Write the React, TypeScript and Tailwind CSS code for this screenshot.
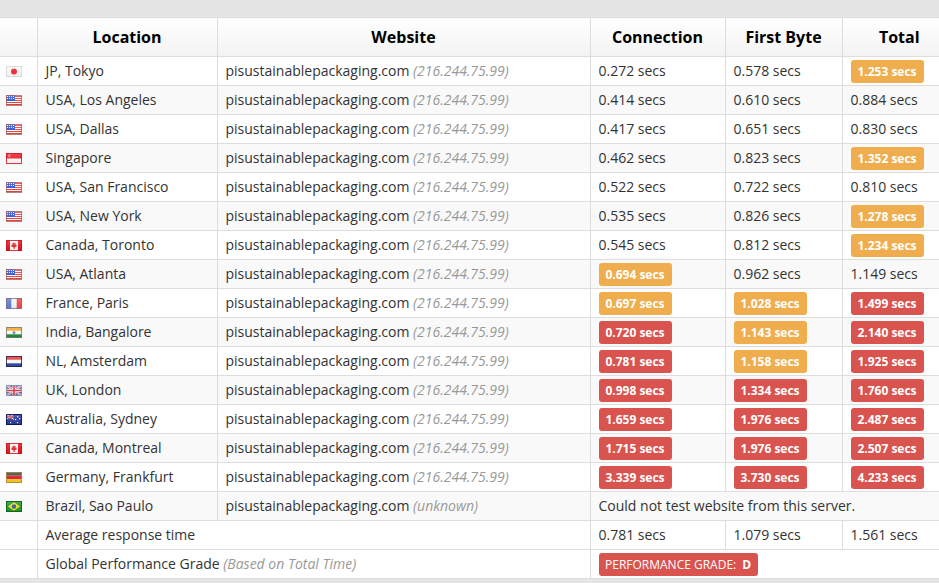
import React from "react";

const Gloss = () => (
  <>
    <defs>
      <linearGradient id="gl" x1="0" y1="0" x2="0" y2="1">
        <stop offset="0" stopColor="#fff" stopOpacity="0.18" />
        <stop offset="0.5" stopColor="#fff" stopOpacity="0.06" />
        <stop offset="1" stopColor="#000" stopOpacity="0.05" />
      </linearGradient>
    </defs>
    <rect x="0" y="0" width="16" height="11" fill="url(#gl)" />
  </>
);

const Frame = ({ c, children }: { c: string; children: React.ReactNode }) => (
  <svg width="16" height="11" viewBox="0 0 16 11" className="block">
    {children}
    <Gloss />
    <rect x="0.5" y="0.5" width="15" height="10" fill="none" stroke={c} strokeOpacity="0.8" />
  </svg>
);

const US = () => (
  <Frame c="#a5645f">
    <rect width="16" height="11" fill="#fff" />
    {[1, 3, 5, 7, 9].map((y) => (
      <rect key={y} y={y} width="16" height="1" fill="#ea4038" />
    ))}
    <rect width="9" height="6" fill="#2f55d8" />
    {[1, 3].map((y) =>
      [1, 3, 5, 7].map((x) => <rect key={`${x}-${y}`} x={x} y={y} width="1" height="1" fill="#e6ecff" />)
    )}
  </Frame>
);

const JP = () => (
  <Frame c="#d4d4d4">
    <rect width="16" height="11" fill="#f8f8f8" />
    <circle cx="8" cy="5.5" r="3" fill="#f0242c" />
  </Frame>
);

const SG = () => (
  <Frame c="#c8141c">
    <rect width="16" height="11" fill="#f7f7f7" />
    <rect width="16" height="5.5" fill="#e8202a" />
    <circle cx="4" cy="2.7" r="1.6" fill="#fbd" />
    <circle cx="4.7" cy="2.7" r="1.4" fill="#e8202a" />
    <rect x="1" y="6" width="14" height="4" fill="#f6f6f6" />
  </Frame>
);

const CA = () => (
  <Frame c="#c8101a">
    <rect width="16" height="11" fill="#f8f8f8" />
    <rect width="4" height="11" fill="#e3141f" />
    <rect x="12" width="4" height="11" fill="#e3141f" />
    <path d="M8 2l.8 1.4 1-.4-.3 2 1.3-.4-.5 1.3.7.4L8.6 7.6V9h-1V7.6L5 6.3l.7-.4-.5-1.3 1.3.4-.3-2 1 .4z" fill="#e3242b" />
  </Frame>
);

const FR = () => (
  <Frame c="#7f6f8f">
    <rect width="16" height="11" fill="#f0f2f8" />
    <rect width="5.3" height="11" fill="#5f7cd0" />
    <rect x="10.7" width="5.3" height="11" fill="#ec4a45" />
  </Frame>
);

const IN = () => (
  <Frame c="#777">
    <rect width="16" height="11" fill="#f8f8f8" />
    <rect width="16" height="3.7" fill="#f5a623" />
    <rect y="7.3" width="16" height="3.7" fill="#1f8a2f" />
    <circle cx="8" cy="5.5" r="1.5" fill="#7a87b5" />
  </Frame>
);

const NL = () => (
  <Frame c="#223">
    <rect width="16" height="11" fill="#f8f8f8" />
    <rect width="16" height="3.7" fill="#e63b3f" />
    <rect y="7.3" width="16" height="3.7" fill="#2f4aa5" />
  </Frame>
);

const UK = () => (
  <Frame c="#8890b0">
    <rect width="16" height="11" fill="#5068b8" />
    <path d="M0 0L16 11M16 0L0 11" stroke="#f4f4f4" strokeWidth="2" />
    <path d="M0 0L16 11M16 0L0 11" stroke="#e0404a" strokeWidth="0.7" />
    <path d="M8 0V11M0 5.5H16" stroke="#f4f4f4" strokeWidth="3" />
    <path d="M8 0V11M0 5.5H16" stroke="#e0303a" strokeWidth="1.6" />
  </Frame>
);

const AU = () => (
  <Frame c="#0a1050">
    <rect width="16" height="11" fill="#2c3a96" />
    <path d="M0 0L8 5.5M8 0L0 5.5" stroke="#e8e8f0" strokeWidth="1" />
    <path d="M4 0V5.5M0 2.7H8" stroke="#e0505a" strokeWidth="1.2" />
    {[[11, 2], [13, 4], [11, 8], [9, 5], [4, 8]].map(([x, y]) => (
      <rect key={`${x}${y}`} x={x} y={y} width="1.2" height="1.2" fill="#eef" />
    ))}
  </Frame>
);

const DE = () => (
  <Frame c="#a08a40">
    <rect width="16" height="3.7" fill="#444" />
    <rect y="3.7" width="16" height="3.6" fill="#dd2020" />
    <rect y="7.3" width="16" height="3.7" fill="#fbc818" />
  </Frame>
);

const BR = () => (
  <Frame c="#0a5a18">
    <rect width="16" height="11" fill="#1f9a2e" />
    <path d="M8 1.3L14 5.5L8 9.7L2 5.5Z" fill="#f5dc20" />
    <circle cx="8" cy="5.5" r="2.2" fill="#3553a8" />
  </Frame>
);

type B = string | [string, "o" | "r"];
type Row = { f: React.FC; loc: string; ip?: string; c?: B; b?: B; t?: B };

const rows: Row[] = [
  { f: JP, loc: "JP, Tokyo", c: "0.272", b: "0.578", t: ["1.253", "o"] },
  { f: US, loc: "USA, Los Angeles", c: "0.414", b: "0.610", t: "0.884" },
  { f: US, loc: "USA, Dallas", c: "0.417", b: "0.651", t: "0.830" },
  { f: SG, loc: "Singapore", c: "0.462", b: "0.823", t: ["1.352", "o"] },
  { f: US, loc: "USA, San Francisco", c: "0.522", b: "0.722", t: "0.810" },
  { f: US, loc: "USA, New York", c: "0.535", b: "0.826", t: ["1.278", "o"] },
  { f: CA, loc: "Canada, Toronto", c: "0.545", b: "0.812", t: ["1.234", "o"] },
  { f: US, loc: "USA, Atlanta", c: ["0.694", "o"], b: "0.962", t: "1.149" },
  { f: FR, loc: "France, Paris", c: ["0.697", "o"], b: ["1.028", "o"], t: ["1.499", "r"] },
  { f: IN, loc: "India, Bangalore", c: ["0.720", "r"], b: ["1.143", "o"], t: ["2.140", "r"] },
  { f: NL, loc: "NL, Amsterdam", c: ["0.781", "r"], b: ["1.158", "o"], t: ["1.925", "r"] },
  { f: UK, loc: "UK, London", c: ["0.998", "r"], b: ["1.334", "r"], t: ["1.760", "r"] },
  { f: AU, loc: "Australia, Sydney", c: ["1.659", "r"], b: ["1.976", "r"], t: ["2.487", "r"] },
  { f: CA, loc: "Canada, Montreal", c: ["1.715", "r"], b: ["1.976", "r"], t: ["2.507", "r"] },
  { f: DE, loc: "Germany, Frankfurt", c: ["3.339", "r"], b: ["3.730", "r"], t: ["4.233", "r"] },
  { f: BR, loc: "Brazil, Sao Paulo", ip: "unknown" },
];

const td = "h-[29px] border border-[#dddddd] px-2 py-0 align-middle whitespace-nowrap overflow-hidden";
const th = "h-[39px] border border-[#dddddd] p-0 text-center align-middle text-base font-bold text-black bg-gradient-to-b from-white to-[#f3f3f3]";

const Val = ({ v }: { v: B }) =>
  typeof v === "string" ? (
    <>{v} secs</>
  ) : (
    <span
      className={`inline-block h-[23px] w-[73px] rounded-[3px] text-center align-middle text-xs leading-[23px] font-bold text-white ${
        v[1] === "o" ? "bg-[#f0ad4e]" : "bg-[#d9534f]"
      }`}
    >
      {v[0]} secs
    </span>
  );

export default function App() {
  return (
    <div className="h-[583px] w-[939px] overflow-hidden bg-[#e5e5e5] pt-[17px] font-['Open_Sans',sans-serif] text-sm text-[#333333]">
      <table className="w-[956px] max-w-none table-fixed border-collapse bg-white">
        <colgroup>
          <col className="w-[37px]" />
          <col className="w-[180px]" />
          <col className="w-[373px]" />
          <col className="w-[135px]" />
          <col className="w-[117px]" />
          <col className="w-[114px]" />
        </colgroup>
        <thead>
          <tr>
            <th className={`${th} border-l-0`}></th>
            <th className={th}>Location</th>
            <th className={th}>Website</th>
            <th className={th}>Connection</th>
            <th className={th}>First Byte</th>
            <th className={`${th} border-r-0`}>Total</th>
          </tr>
        </thead>
        <tbody>
          {rows.map((r, i) => (
            <tr key={i} className={i % 2 ? "bg-[#f9f9f9]" : "bg-white"}>
              <td className={`${td} border-l-0`}>
                <div className="-ml-0.5">
                  <r.f />
                </div>
              </td>
              <td className={td}>{r.loc}</td>
              <td className={td}>
                pisustainablepackaging.com{" "}
                <i className="text-[#999999]">({r.ip ?? "216.244.75.99"})</i>
              </td>
              {r.c ? (
                <>
                  <td className={td}><Val v={r.c} /></td>
                  <td className={td}><Val v={r.b!} /></td>
                  <td className={`${td} border-r-0`}><Val v={r.t!} /></td>
                </>
              ) : (
                <td className={`${td} border-r-0`} colSpan={3}>
                  Could not test website from this server.
                </td>
              )}
            </tr>
          ))}
          <tr className="bg-white">
            <td className={`${td} border-l-0`}></td>
            <td className={td} colSpan={2}>Average response time</td>
            <td className={td}>0.781 secs</td>
            <td className={td}>1.079 secs</td>
            <td className={`${td} border-r-0`}>1.561 secs</td>
          </tr>
          <tr className="bg-white">
            <td className={`${td} border-l-0`}></td>
            <td className={td} colSpan={2}>
              Global Performance Grade <i className="text-[#999999]">(Based on Total Time)</i>
            </td>
            <td className={`${td} border-r-0`} colSpan={3}>
              <span className="inline-block h-[23px] rounded-[3px] bg-[#d9534f] px-[6.5px] align-middle text-xs leading-[23px] text-white">
                PERFORMANCE GRADE: <b className="ml-[3px]">D</b>
              </span>
            </td>
          </tr>
        </tbody>
      </table>
    </div>
  );
}
